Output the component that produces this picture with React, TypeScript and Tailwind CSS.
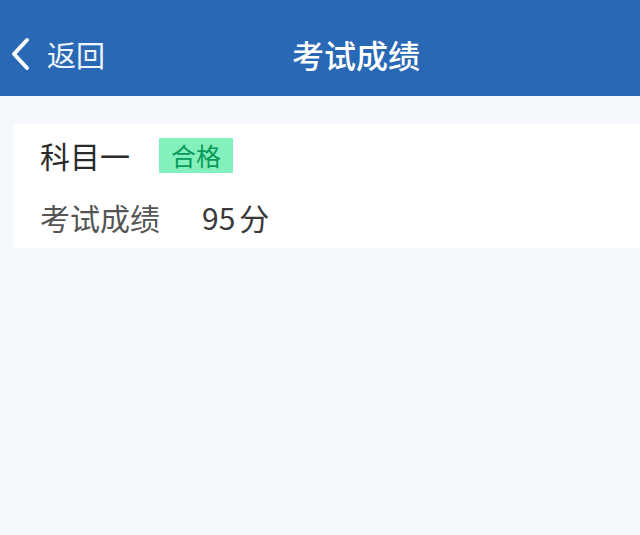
export default function App() {
  return (
    <div
      className="w-[640px] h-[535px] bg-[#f4f7fb] flex flex-col"
      style={{ fontFamily: '"Noto Sans CJK SC", "Noto Sans", sans-serif' }}
    >
      {/* Header */}
      <div className="h-[96px] bg-[#2868b4] flex items-center relative shrink-0 pt-[12px]">
        <div className="flex items-center pl-[9px] gap-[16px] text-white">
          <svg width="22" height="34" viewBox="0 0 22 34" fill="none">
            <path d="M18 3 L5 17 L18 31" stroke="white" strokeWidth="4" strokeLinecap="round" strokeLinejoin="round" />
          </svg>
          <span className="text-[29px] leading-none text-[#eef4fb]">返回</span>
        </div>
        <div className="absolute left-0 right-0 top-[12px] bottom-0 flex items-center justify-center pl-[72px] pointer-events-none">
          <span className="text-[32px] font-medium leading-none text-white">考试成绩</span>
        </div>
      </div>

      {/* Card */}
      <div className="mt-[28px] ml-[14px] bg-white h-[124px] flex flex-col justify-center pl-[26px] gap-[26px]">
        <div className="flex items-center h-[36px]">
          <span className="text-[30px] leading-none text-[#2a2a2a]">科目一</span>
          <span className="ml-[29px] bg-[#84f0bb] text-[#0b9a5c] text-[25px] leading-none px-[12px] h-[35px] flex items-center">
            合格
          </span>
        </div>
        <div className="flex items-center h-[36px]">
          <span className="text-[30px] leading-none text-[#555555]">考试成绩</span>
          <span className="ml-[42px] text-[30px] leading-none text-[#3a3a3a]">
            95<span className="ml-[4px]">分</span>
          </span>
        </div>
      </div>
    </div>
  );
}
